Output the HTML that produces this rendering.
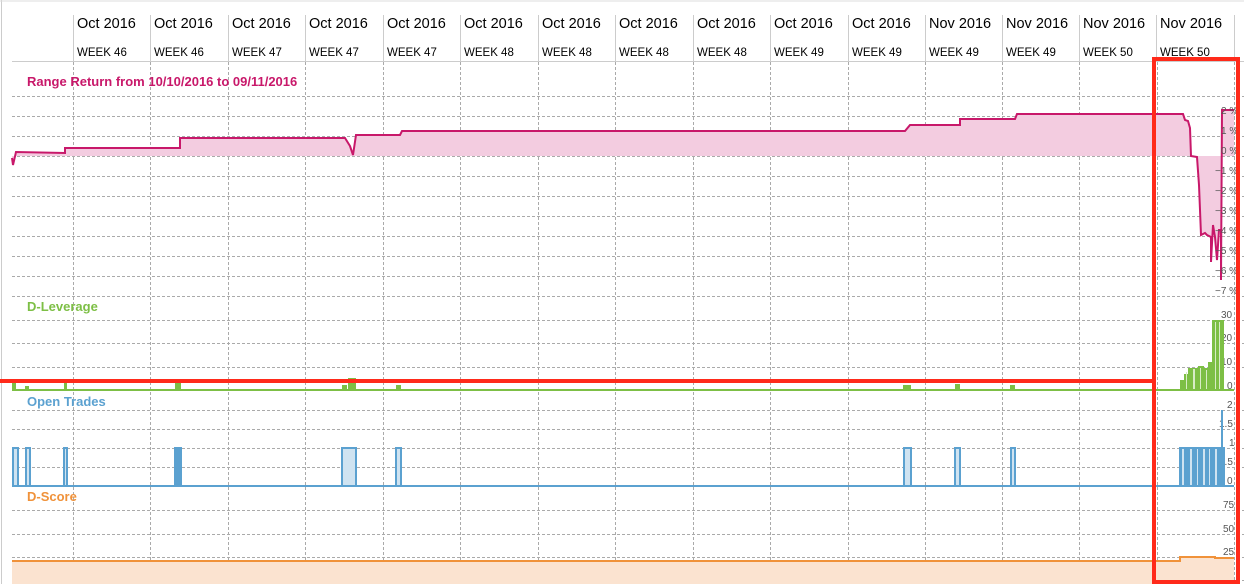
<!DOCTYPE html>
<html><head><meta charset="utf-8"><style>
html,body{margin:0;padding:0;background:#fff;}
svg{display:block;font-family:"Liberation Sans",sans-serif;}
</style></head><body>
<svg width="1244" height="584" viewBox="0 0 1244 584" xmlns="http://www.w3.org/2000/svg">
<rect width="1244" height="584" fill="#fff"/>
<line x1="1.5" y1="0" x2="1.5" y2="584" stroke="#ccc"/>
<line x1="0" y1="1" x2="1244" y2="1" stroke="#ddd"/>
<line x1="12" y1="61.5" x2="1244" y2="61.5" stroke="#ccc"/>
<g stroke="#ccc" stroke-width="1">
<line x1="73.5" y1="15" x2="73.5" y2="61"/><line x1="150.5" y1="15" x2="150.5" y2="61"/><line x1="228.5" y1="15" x2="228.5" y2="61"/><line x1="305.5" y1="15" x2="305.5" y2="61"/><line x1="383.5" y1="15" x2="383.5" y2="61"/><line x1="460.5" y1="15" x2="460.5" y2="61"/><line x1="538.5" y1="15" x2="538.5" y2="61"/><line x1="615.5" y1="15" x2="615.5" y2="61"/><line x1="693.5" y1="15" x2="693.5" y2="61"/><line x1="770.5" y1="15" x2="770.5" y2="61"/><line x1="848.5" y1="15" x2="848.5" y2="61"/><line x1="925.5" y1="15" x2="925.5" y2="61"/><line x1="1002.5" y1="15" x2="1002.5" y2="61"/><line x1="1079.5" y1="15" x2="1079.5" y2="61"/><line x1="1156.5" y1="15" x2="1156.5" y2="61"/><line x1="1234.5" y1="15" x2="1234.5" y2="61"/>
</g>
<g font-size="14.5" fill="#000">
<text x="77" y="28">Oct 2016</text><text x="154" y="28">Oct 2016</text><text x="232" y="28">Oct 2016</text><text x="309" y="28">Oct 2016</text><text x="387" y="28">Oct 2016</text><text x="464" y="28">Oct 2016</text><text x="542" y="28">Oct 2016</text><text x="619" y="28">Oct 2016</text><text x="697" y="28">Oct 2016</text><text x="774" y="28">Oct 2016</text><text x="852" y="28">Oct 2016</text><text x="929" y="28">Nov 2016</text><text x="1006" y="28">Nov 2016</text><text x="1083" y="28">Nov 2016</text><text x="1160" y="28">Nov 2016</text>
</g>
<g font-size="11.5" fill="#000">
<text x="77" y="56">WEEK 46</text><text x="154" y="56">WEEK 46</text><text x="232" y="56">WEEK 47</text><text x="309" y="56">WEEK 47</text><text x="387" y="56">WEEK 47</text><text x="464" y="56">WEEK 48</text><text x="542" y="56">WEEK 48</text><text x="619" y="56">WEEK 48</text><text x="697" y="56">WEEK 48</text><text x="774" y="56">WEEK 49</text><text x="852" y="56">WEEK 49</text><text x="929" y="56">WEEK 49</text><text x="1006" y="56">WEEK 49</text><text x="1083" y="56">WEEK 50</text><text x="1160" y="56">WEEK 50</text>
</g>
<g stroke="#aaa" stroke-dasharray="3,2" stroke-width="1">
<line x1="73.5" y1="62" x2="73.5" y2="584"/><line x1="150.5" y1="62" x2="150.5" y2="584"/><line x1="228.5" y1="62" x2="228.5" y2="584"/><line x1="305.5" y1="62" x2="305.5" y2="584"/><line x1="383.5" y1="62" x2="383.5" y2="584"/><line x1="460.5" y1="62" x2="460.5" y2="584"/><line x1="538.5" y1="62" x2="538.5" y2="584"/><line x1="615.5" y1="62" x2="615.5" y2="584"/><line x1="693.5" y1="62" x2="693.5" y2="584"/><line x1="770.5" y1="62" x2="770.5" y2="584"/><line x1="848.5" y1="62" x2="848.5" y2="584"/><line x1="925.5" y1="62" x2="925.5" y2="584"/><line x1="1002.5" y1="62" x2="1002.5" y2="584"/><line x1="1079.5" y1="62" x2="1079.5" y2="584"/><line x1="1157.5" y1="62" x2="1157.5" y2="584"/><line x1="1234.5" y1="62" x2="1234.5" y2="584"/>
<line x1="12" y1="96.5" x2="1244" y2="96.5"/><line x1="12" y1="116.5" x2="1244" y2="116.5"/><line x1="12" y1="136.5" x2="1244" y2="136.5"/><line x1="12" y1="156.5" x2="1244" y2="156.5"/><line x1="12" y1="176.5" x2="1244" y2="176.5"/><line x1="12" y1="196.5" x2="1244" y2="196.5"/><line x1="12" y1="216.5" x2="1244" y2="216.5"/><line x1="12" y1="236.5" x2="1244" y2="236.5"/><line x1="12" y1="256.5" x2="1244" y2="256.5"/><line x1="12" y1="276.5" x2="1244" y2="276.5"/><line x1="12" y1="296.5" x2="1244" y2="296.5"/>
<line x1="12" y1="320.5" x2="1244" y2="320.5"/><line x1="12" y1="343.5" x2="1244" y2="343.5"/><line x1="12" y1="367.5" x2="1244" y2="367.5"/>
<line x1="12" y1="410.5" x2="1244" y2="410.5"/><line x1="12" y1="429.5" x2="1244" y2="429.5"/><line x1="12" y1="448.5" x2="1244" y2="448.5"/><line x1="12" y1="467.5" x2="1244" y2="467.5"/>
<line x1="12" y1="510.5" x2="1244" y2="510.5"/><line x1="12" y1="534.5" x2="1244" y2="534.5"/><line x1="12" y1="557.5" x2="1244" y2="557.5"/><line x1="12" y1="580.5" x2="1244" y2="580.5"/>
</g>
<text x="27" y="86" font-size="13" font-weight="bold" fill="#c8186a">Range Return from 10/10/2016 to 09/11/2016</text>
<path d="M12,156 L12,158 13,165 16,152 65,153 65,148 180,148 180,138 345,138 350,146 353,155 356,135 400,135 402,131 905,131 910,125 960,125 960,119 1015,119 1017,114 1183,114 1185,120 1188,121 1190,128 1191,156 1197,157 1199,185 1201,235 1205,233 1207,235 1211,237 1211,262 1213,225 1215,237 1217,260 1219,230 1221,230 1221,280 1222,110 1234,110 1234,156 Z" fill="#f3cce0" stroke="none"/>
<path d="M12,158 L13,165 16,152 65,153 65,148 180,148 180,138 345,138 350,146 353,155 356,135 400,135 402,131 905,131 910,125 960,125 960,119 1015,119 1017,114 1183,114 1185,120 1188,121 1190,128 1191,156 1197,157 1199,185 1201,235 1205,233 1207,235 1211,237 1211,262 1213,225 1215,237 1217,260 1219,230 1221,230 1221,280 1222,110 1234,110" fill="none" stroke="#c8186a" stroke-width="2"/>
<g font-size="10" fill="#555">
<text x="1221" y="114">2 %</text><text x="1221" y="134">1 %</text><text x="1221" y="154">0 %</text><text x="1215" y="174">−1 %</text><text x="1215" y="194">−2 %</text><text x="1215" y="214">−3 %</text><text x="1215" y="234">−4 %</text><text x="1215" y="254">−5 %</text><text x="1215" y="274">−6 %</text><text x="1215" y="294">−7 %</text>
<text x="1221" y="318">30</text><text x="1221" y="341">20</text><text x="1221" y="365">10</text><text x="1227" y="389">0</text>
<text x="1227" y="408">2</text><text x="1219" y="427">1.5</text><text x="1229" y="446">1</text><text x="1219" y="465">0.5</text><text x="1227" y="484">0</text>
<text x="1223" y="508">75</text><text x="1223" y="532">50</text><text x="1223" y="555">25</text><text x="1227" y="578">0</text>
</g>
<text x="27" y="311" font-size="13" font-weight="bold" fill="#7dbf45">D-Leverage</text>
<g fill="#7dbf45">
<rect x="12" y="383" width="4" height="7"/><rect x="25" y="386" width="4" height="4"/><rect x="64" y="383" width="3" height="7"/><rect x="175" y="383" width="6" height="7"/><rect x="342" y="385" width="5" height="5"/><rect x="348" y="378" width="8" height="12"/><rect x="396" y="385" width="5" height="5"/><rect x="903" y="385" width="8" height="5"/><rect x="955" y="384" width="5" height="6"/><rect x="1010" y="385" width="5" height="5"/>
<rect x="1180" y="380" width="4" height="10"/><rect x="1184" y="374" width="4" height="16"/><rect x="1188" y="368" width="10" height="22"/><rect x="1198" y="366" width="6" height="24"/><rect x="1204" y="368" width="4" height="22"/><rect x="1208" y="362" width="4" height="28"/><rect x="1212" y="320" width="12" height="70"/>
</g>
<g fill="#d8ecc6"><rect x="1186" y="372" width="1" height="17"/><rect x="1193" y="369" width="2" height="20"/><rect x="1200" y="368" width="1" height="21"/><rect x="1206" y="370" width="1" height="19"/><rect x="1215" y="322" width="1" height="67"/><rect x="1219" y="322" width="1" height="67"/></g>
<line x1="12" y1="390" x2="1234" y2="390" stroke="#7dbf45" stroke-width="2"/>
<text x="27" y="406" font-size="13" font-weight="bold" fill="#5ba1d0">Open Trades</text>
<g fill="#cfe3f1" stroke="#5ba1d0" stroke-width="2">
<rect x="13" y="448" width="5" height="38"/><rect x="26" y="448" width="4" height="38"/><rect x="64" y="448" width="3" height="38"/><rect x="175" y="448" width="6" height="38" fill="#5ba1d0"/><rect x="342" y="448" width="14" height="38"/><rect x="396" y="448" width="5" height="38"/><rect x="904" y="448" width="7" height="38"/><rect x="955" y="448" width="5" height="38"/><rect x="1011" y="448" width="4" height="38"/>
<rect x="1180" y="448" width="44" height="38" fill="#5ba1d0"/>
</g>
<g fill="#cfe3f1"><rect x="1182" y="449" width="2" height="36"/><rect x="1190" y="449" width="2" height="36"/><rect x="1197" y="449" width="1" height="36"/><rect x="1203" y="449" width="2" height="36"/><rect x="1209" y="449" width="1" height="36"/><rect x="1215" y="449" width="2" height="36"/></g>
<line x1="1222" y1="410" x2="1222" y2="486" stroke="#5ba1d0" stroke-width="2"/>
<line x1="12" y1="486" x2="1234" y2="486" stroke="#5ba1d0" stroke-width="2"/>
<text x="27" y="501" font-size="13" font-weight="bold" fill="#f0923a">D-Score</text>
<path d="M12,561 L1180,561 1180,557 1215,557 1215,558 1234,558 1234,584 12,584 Z" fill="#fbe3d0"/>
<path d="M12,561 L1180,561 1180,557 1215,557 1215,558 1234,558" fill="none" stroke="#f0923a" stroke-width="2"/>
<line x1="0" y1="381" x2="1153" y2="381" stroke="#ff2a1a" stroke-width="4"/>
<rect x="1154" y="59" width="84" height="523" fill="none" stroke="#ff2a1a" stroke-width="4"/>
</svg>
</body></html>
